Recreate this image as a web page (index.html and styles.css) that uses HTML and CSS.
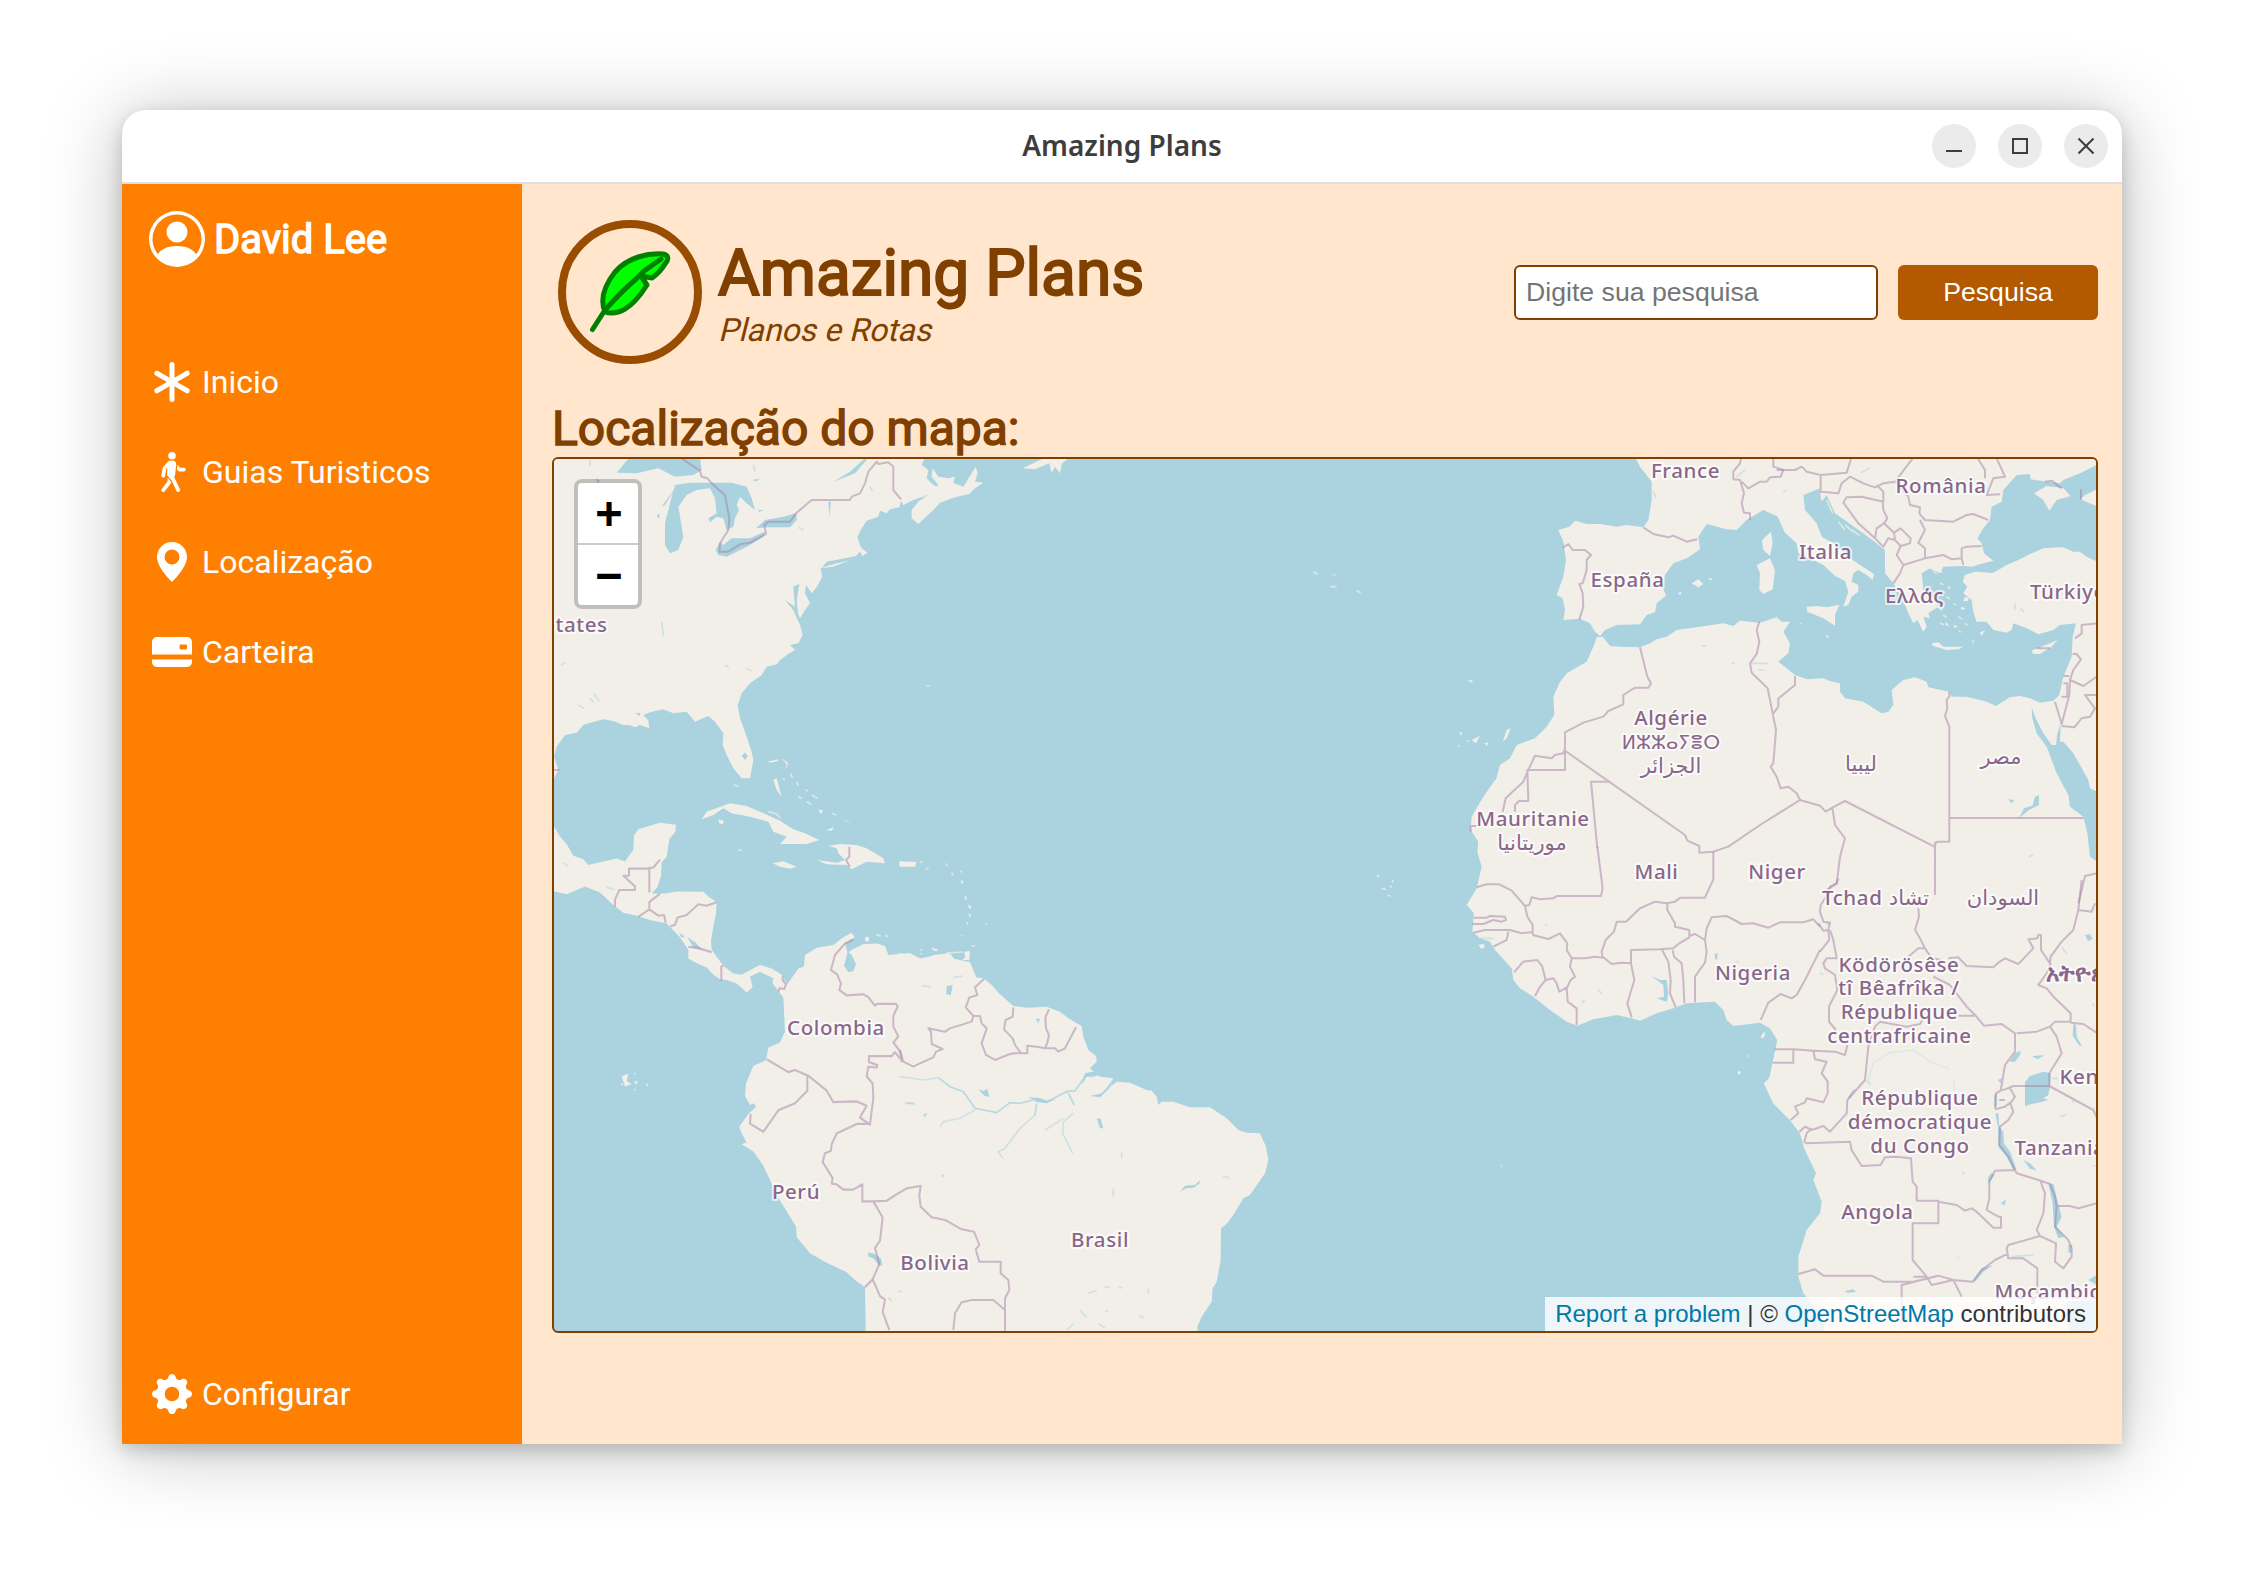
FILE: index.html
```html
<!DOCTYPE html>
<html lang="pt-BR">
<head>
<meta charset="utf-8">
<title>Amazing Plans</title>
<link rel="stylesheet" href="styles.css">
</head>
<body>
<div class="window">
  <header class="titlebar">
    <span class="titlebar-text">Amazing Plans</span>
    <div class="window-buttons">
      <span class="window-button"><svg viewBox="0 0 44 44"><path d="M14 27h16"/></svg></span>
      <span class="window-button"><svg viewBox="0 0 44 44"><path d="M15 15h14v14H15z"/></svg></span>
      <span class="window-button"><svg viewBox="0 0 44 44"><path d="M14.500 14.500l15 15m0-15l-15 15"/></svg></span>
    </div>
  </header>
  <div class="app">
    <nav class="sidebar">
      <div class="profile">
        <svg class="avatar" viewBox="0 0 16 16"><path d="M11 6a3 3 0 1 1-6 0 3 3 0 0 1 6 0"/><path fill-rule="evenodd" d="M0 8a8 8 0 1 1 16 0A8 8 0 0 1 0 8m8-7a7 7 0 0 0-5.468 11.37C3.242 11.226 4.805 10 8 10s4.757 1.225 5.468 2.37A7 7 0 0 0 8 1"/></svg>
        <span class="profile-name">David Lee</span>
      </div>
      <ul class="menu">
        <li class="menu-item"><svg class="icon" viewBox="0 0 16 16"><path d="M8 0a1 1 0 0 1 1 1v5.268l4.562-2.634a1 1 0 1 1 1 1.732L10 8l4.562 2.634a1 1 0 1 1-1 1.732L9 9.732V15a1 1 0 1 1-2 0V9.732l-4.562 2.634a1 1 0 1 1-1-1.732L6 8 1.438 5.366a1 1 0 0 1 1-1.732L7 6.268V1a1 1 0 0 1 1-1"/></svg>Inicio</li>
        <li class="menu-item"><svg class="icon" viewBox="0 0 16 16"><path d="M9.5 1.5a1.5 1.5 0 1 1-3 0 1.500 1.500 0 0 1 3 0M6.440 3.752A.75.75 0 0 1 7 3.500h1.445c.742 0 1.320.643 1.243 1.380l-.43 4.083a1.800 1.800 0 0 1-.088.395l-.318.906.213.242a.8.8 0 0 1 .114.175l2 4.250a.75.75 0 1 1-1.357.638l-1.956-4.154-1.680-1.921A.75.75 0 0 1 6 8.960l.138-2.613-.435.489-.464 2.786a.75.75 0 1 1-1.480-.246l.5-3a.75.75 0 0 1 .18-.375l2-2.250Z"/><path d="M6.250 11.745v-1.418l1.204 1.375.261.524a.8.8 0 0 1-.12.231l-2.500 3.250a.75.75 0 1 1-1.190-.914zm4.220-4.215-.494-.494.205-1.843.006-.067 1.124 1.124h1.440a.75.75 0 0 1 0 1.500H11a.75.75 0 0 1-.531-.22Z"/></svg>Guias Turisticos</li>
        <li class="menu-item"><svg class="icon" viewBox="0 0 16 16"><path d="M8 16s6-5.686 6-10A6 6 0 0 0 2 6c0 4.314 6 10 6 10m0-7a3 3 0 1 1 0-6 3 3 0 0 1 0 6"/></svg>Localização</li>
        <li class="menu-item"><svg class="icon" viewBox="0 0 16 16"><path d="M0 4a2 2 0 0 1 2-2h12a2 2 0 0 1 2 2v5H0zm11.500 1a.5.5 0 0 0-.5.5v1a.5.5 0 0 0 .5.5h2a.5.5 0 0 0 .5-.5v-1a.5.5 0 0 0-.5-.5zM0 11v1a2 2 0 0 0 2 2h12a2 2 0 0 0 2-2v-1z"/></svg>Carteira</li>
        <li class="menu-item menu-item-last"><svg class="icon" viewBox="0 0 16 16"><path d="M9.405 1.050c-.413-1.400-2.397-1.400-2.810 0l-.1.34a1.464 1.464 0 0 1-2.105.872l-.31-.17c-1.283-.698-2.686.705-1.987 1.987l.169.311c.446.82.023 1.841-.872 2.105l-.34.1c-1.400.413-1.400 2.397 0 2.810l.34.1a1.464 1.464 0 0 1 .872 2.105l-.17.31c-.698 1.283.705 2.686 1.987 1.987l.311-.169a1.464 1.464 0 0 1 2.105.872l.1.34c.413 1.400 2.397 1.400 2.810 0l.1-.34a1.464 1.464 0 0 1 2.105-.872l.31.17c1.283.698 2.686-.705 1.987-1.987l-.169-.311a1.464 1.464 0 0 1 .872-2.105l.34-.1c1.400-.413 1.400-2.397 0-2.810l-.34-.1a1.464 1.464 0 0 1-.872-2.105l.17-.31c.698-1.283-.705-2.686-1.987-1.987l-.311.169a1.464 1.464 0 0 1-2.105-.872zM8 10.930a2.929 2.929 0 1 1 0-5.860 2.929 2.929 0 0 1 0 5.858z"/></svg>Configurar</li>
      </ul>
    </nav>
    <main class="content">
      <div class="page-head">
        <svg class="logo" viewBox="558 220 144 144">
          <circle cx="630" cy="292" r="68" fill="none" stroke="#994d00" stroke-width="8"/>
          <g stroke="#008000" stroke-width="5" stroke-linejoin="round" stroke-linecap="round">
            <path fill="#00ff00" d="M605 312C600 300 604 286 615 272C628 257 648 253 663 254C669 255 669 260 665 264C661 271 656 275 652 278L641 276L647 285C640 296 634 304 625 309C618 313 611 314 605 312Z"/>
            <path fill="none" d="M592.500 329.500L605 310Q622 291 636 279L644 271L661 259"/>
          </g>
        </svg>
        <div class="brand">
          <h1 class="brand-name">Amazing Plans</h1>
          <p class="brand-tag">Planos e Rotas</p>
        </div>
        <form class="search">
          <input class="search-input" type="text" placeholder="Digite sua pesquisa">
          <button class="search-button" type="button">Pesquisa</button>
        </form>
      </div>
      <h2 class="map-title">Localização do mapa:</h2>
      <div class="map">
        <svg class="map-canvas" viewBox="554 459 1542 872">
          <!-- Land masses -->
          <g transform="translate(550 450) scale(.33333)">
            <path class="land" d="M0 20L1125 20 1115 45 1135 60 1130 85 1150 105 1180 118 1150 125 1120 140 1085 150 1053 152 1048 172 1020 178 1010 190 990 182 985 200 950 212 932 240 922 262 930 285 935 295 952 308 938 318 930 305 918 318 870 328 830 335 812 358 817 380 800 412 785 430 768 405 765 430 780 460 765 480 750 505 735 470 705 450 730 480 750 525 758 555 745 580 720 585 735 600 715 612 690 630 680 643 650 650 635 675 600 700 575 730 563 765 570 805 590 860 605 905 610 930 600 985 575 985 550 955 530 915 518 885 520 850 495 815 475 798 435 815 410 785 370 790 340 778 300 787 280 795 295 812 298 835 270 825 255 832 240 825 220 825 190 813 160 808 115 820 100 825 80 848 45 855 20 890 12 920 25 960 12 985 0 985Z"/>
            <path class="land" d="M1053 152L1100 130 1150 118 1165 105 1145 80 1148 55 1165 80 1195 85 1215 80 1210 98 1240 110 1262 75 1277 50 1283 70 1275 95 1300 98 1275 115 1258 132 1215 142 1170 158 1150 180 1105 222 1085 205 1085 180 1105 155 1140 130 1110 140 1060 165ZM1418 55L1450 40 1490 20 1560 20 1535 42 1530 70 1515 50 1505 68 1498 40 1455 58ZM810 355L850 343 900 330 850 350ZM455 1108L470 1085 540 1060 590 1068 640 1090 690 1112 730 1138 765 1150 808 1170 770 1182 690 1182 710 1160 670 1145 655 1115 600 1100 545 1090 520 1075 490 1095ZM505 1108L522 1112 518 1123 508 1120ZM668 1240L700 1234 740 1250 720 1256 690 1250ZM800 1230L860 1238 885 1230 865 1210 860 1195 835 1187 870 1182 920 1185 950 1195 975 1210 1000 1225 1005 1240 950 1235 905 1258 890 1245 830 1243ZM1048 1234L1100 1236 1095 1250 1048 1250ZM670 990L680 985 688 1015 695 1040 680 1020ZM653 935L685 928 684 933 660 938ZM695 925L715 940 706 960 710 942ZM828 1140L852 1132 845 1142ZM880 1107L905 1118 888 1113ZM805 1077L820 1082 812 1092ZM1232 1290l8 4-4 10zM1243 1335l8 8-4 10z"/>
            <path class="shoal" d="M722 970l6 14M740 995l4 12M765 1018l8 6M785 1035l18 10M770 1055l14 8M745 1040l10 6M845 1090l14 5M655 1085l24 6 12 14M700 985l4 6M1130 708h8M1110 1236h8M1128 1256h8M1188 1240l4 10M1232 1262l4 6M1205 1268l4 8M552 1005l14 4M565 1200l10 2"/>
          </g>
          <g transform="translate(550 780) scale(.33333 .35714)">
            <path class="land" d="M-5 125L12 130 30 158 50 180 70 212 100 222 115 238 150 230 200 220 225 228 250 195 252 155 265 138 330 120 378 125 376 145 358 165 350 215 335 230 333 270 322 300 305 318 345 318 380 312 460 313 478 328 500 342 498 375 490 410 483 450 485 475 520 520 550 542 575 545 605 530 630 518 665 528 695 545 712 572 745 528 762 522 765 490 800 470 850 462 880 440 905 428 914 440 885 457 893 485 905 475 940 460 980 458 1005 465 1015 490 1080 485 1110 500 1150 492 1190 488 1210 500 1260 510 1300 600 1300 1600 948 1600 945 1420 915 1400 890 1378 830 1352 780 1325 740 1280 738 1250 705 1200 685 1170 665 1130 640 1080 610 1040 575 1020 590 1015 575 990 568 970 595 935 618 915 612 905 600 910 585 885 588 850 610 800 648 785 655 750 690 735 705 705 700 610 685 590 668 570 670 555 630 537 600 550 608 580 590 595 560 570 530 560 510 558 490 545 470 525 445 515 415 500 415 475 390 440 350 402 300 392 260 380 220 372 190 350 150 315 105 298 50 320 -5 308ZM215 830l20-8-5 20 15 10-20 6zM252 845l12-2-6 10zM288 850l8 2-6 6zM948 438l10 4-4 12-10-6z"/>
            <path class="shoal" d="M980 433l12 4M1005 436l8 2M1150 472l12 6M212 850l8 4M252 820l4 4M252 866l4 2M1115 485l-4 3"/>
          </g>
          <g transform="translate(900 900) scale(.33333)">
            <path class="land" d="M-5 160L35 162 60 178 80 178 100 165 150 160 165 180 200 188 215 200 222 232 250 235 275 255 297 280 310 292 340 318 380 323 440 320 480 335 510 358 545 378 550 410 565 450 588 468 590 485 570 505 600 530 640 535 630 560 650 545 690 548 740 570 755 572 770 590 775 615 785 605 820 605 870 622 930 622 980 655 1015 690 1040 698 1080 700 1098 740 1105 780 1095 820 1050 885 1030 895 1000 945 980 972 963 985 962 1080 950 1145 938 1165 935 1205 905 1250 892 1280 895 1310 -5 1310ZM192 155l18-2-2 28-20-2 8-8zM202 12l12 8-4 8zM205 40l8 4-4 8zM200 65l6 4-4 6zM255 68l8 4-4 3zM183 105l8 2-4 3z"/>
            <path class="shoal" d="M95 145l10 6 8-4M60 150h6M138 159l50-3M215 138h10"/>
          </g>
          <g transform="translate(1440 450) scale(.33333)">
            <path class="land" d="M585 20L600 50 635 95 635 150 625 210 610 232 560 225 530 230 480 222 440 222 405 212 388 230 355 240 370 275 378 330 370 380 350 435 368 445 375 480 370 510 420 506 450 520 465 545 480 558 495 540 530 525 600 523 620 495 645 487 650 460 678 437 668 410 675 375 700 340 740 325 780 298 775 260 800 222 860 238 890 240 920 210 970 180 1015 200 1035 248 1045 248 1045 20Z"/>
            <path class="land" d="M470 562L460 590 440 635 380 670 358 700 340 740 343 795 320 830 285 865 230 885 210 925 180 945 165 1000 130 1050 115 1085 90 1130 115 1170 115 1210 1200 1210 1200 700 1140 687 1105 690 1065 675 1040 655 1015 635 1045 610 1050 580 1030 545 1050 515 1025 515 1010 502 960 518 900 512 880 528 850 520 780 530 710 540 680 560 650 568 630 580 600 592 540 590 510 588 488 560ZM993 245L998 280 990 318 970 300 966 270ZM990 325L1005 360 998 418 970 432 958 420 960 370 950 345ZM755 400L775 388 790 402 775 412ZM805 383l15 4-10 4zM714 430l12-6-6 12zM84 690l16 2-8 6zM58 848l8-2-2 12zM95 870l25-12-12 22zM132 878l14 0-6 10zM188 875L200 840 212 835 200 865Z"/>
            <path class="shoal" d="M80 873h8M54 888h6M-250 422l12 6M-380 365l14 8M-330 410h20M-320 375h6"/>
          </g>
          <g transform="translate(1780 450) scale(.33333)">
            <path class="land" d="M-10 20L-10 195 0 215 15 248 50 280 55 310 100 330 130 345 165 378 195 393 205 425 190 470 205 465 215 440 235 425 235 405 215 395 220 370 235 360 260 375 278 390 282 372 240 345 205 320 160 280 125 260 110 220 75 180 70 135 95 125 118 115 125 155 140 135 165 190 215 225 270 265 315 300 315 370 340 400 365 440 385 490 400 520 412 510 430 545 440 530 430 500 450 505 445 490 475 470 455 440 430 420 425 370 450 355 480 370 490 350 545 348 575 350 640 332 612 310 605 280 592 265 610 235 630 210 635 170 665 155 670 120 710 75 750 72 752 88 800 95 840 100 850 90 900 70 950 45 950 20Z"/>
            <path class="land" d="M960 338L940 330 920 320 900 305 880 305 850 292 790 295 750 312 715 330 680 345 640 368 585 365 555 375 548 395 562 410 550 430 575 450 580 485 590 515 620 515 640 540 680 548 695 540 700 520 740 535 775 553 820 540 840 525 888 520 878 560 875 620 850 680 838 735 820 752 780 758 750 745 720 738 690 742 648 768 620 755 560 740 515 740 508 725 445 712 440 695 405 682 370 690 335 720 340 765 325 785 305 790 250 755 195 745 180 725 175 705 130 685 80 688 40 675 0 650 -20 620 -20 1360 960 1360ZM80 470L110 468 140 472 178 464 165 495 165 527 130 505 82 485ZM455 580L475 577 490 590 550 590 535 598 500 600 460 588ZM755 602L790 588 832 570 815 590 780 612 760 612ZM762 130L800 108 850 115 872 138 830 150 808 182 790 150ZM900 148L915 135 950 118 950 168ZM600 548l15-8-10 18zM555 440l12 4-4 10-14-2zM498 515l10 14-12-4zM520 525l14 4-10 6zM500 410l12 0-2 8zM535 540l10 6-6 2zM545 470l12 6-14 4z"/>
            <path class="shoal" d="M450 350l20 22M465 350l22 18M480 400l10 4M498 440l12 6M475 470l12 12M520 460l8 6M535 500l12 8M490 495l10 8M480 520l12 4M555 520l8 6M580 570v10M175 215l20 24M195 225l24 20M215 240l24 16M140 150l18 40M138 555l8 8M62 518v5"/>
          </g>
          <g transform="translate(1440 780) scale(.33333)">
            <path class="land" d="M165 0L130 50 95 110 92 150 115 185 112 215 125 260 110 325 80 375 102 400 97 455 120 475 150 485 165 510 215 565 220 600 240 625 280 650 330 690 380 725 412 737 460 718 530 705 575 715 600 722 650 700 700 685 740 670 825 665 850 690 860 720 880 738 960 728 990 745 1012 780 1000 840 988 895 972 910 1000 970 1050 1020 1080 1060 1095 1110 1128 1175 1130 1210 1200 1210 1200 0ZM962 770l10-14 4 6-8 14zM892 876l8-4 2 8-6 4zM115 495l15-4 5 10-10 6z"/>
            <path class="shoal" d="M922 828h5M182 1157h4M-175 325l14 4M-190 285l8 6M-142 300v8M-150 315l4 8M-158 345l10 4"/>
          </g>
          <g transform="translate(1760 880) scale(.33333)">
            <path class="land" d="M0 -50L0 425 30 445 52 480 40 540 28 595 12 610 40 670 90 720 120 760 135 810 168 880 160 900 185 965 180 1000 140 1050 115 1130 115 1190 130 1240 180 1300 200 1370 1020 1370 1020 -50Z"/>
          </g>
          <!-- Lakes, rivers and national borders -->
          <g transform="translate(550 450) scale(.33333)">
            <path class="water" d="M200 68L240 20 450 20 455 60 430 75 375 80 325 55 260 70ZM375 105L420 98 470 98 545 98 590 110 605 145 615 180 590 160 570 140 560 165 567 180 555 205 550 230 530 240 520 205 500 200 480 217 475 205 500 190 495 145 480 115 440 120 410 135 385 170 400 260 385 300 360 310 345 285 345 220 360 160ZM497 300L510 275 520 285 545 265 600 265 645 245 640 260 600 285 560 305 530 320 505 315ZM618 235L645 210 700 200 738 190 740 210 720 232 650 232ZM850 95L900 65 945 25 950 30 915 70ZM335 170L375 115 370 125 345 165ZM835 155L843 155 838 200ZM575 918l10-10 8 10-8 12zM138 85l12 8-8 8zM730 410L748 402 740 450 745 500 735 470ZM320 198l8-8v16zM605 90l25-4-10 8zM625 180l15 0-12 6zM255 790l16-2-2 10z"/>
            <path class="stream" d="M335 515l6 45M130 730l18 24M35 645l10-8M85 765l16 10M120 745l12 12M525 645l12 8M590 655l14 8M960 110l8 14M745 232l16 8M610 45l6 20M120 30v18"/>
            <path class="border" d="M390 22L450 62 455 80 472 85 490 105 525 135 538 205 535 240 510 280 508 305 535 305 570 283 600 278 648 252 643 225 655 215 720 215 740 188 785 150 900 150 905 140 930 130 945 100 955 65 980 35 985 42 1015 37 1030 50 1030 120 1053 148M8 960H28M898 1190V1220L888 1230 900 1250"/>
          </g>
          <g transform="translate(550 780) scale(.33333 .35714)">
            <path class="water" d="M893 480L905 490 918 515 910 535 895 538 882 520 888 500ZM388 430l12 4 4 8-10-2zM412 440l25 15 18 18-25-4zM955 1322l20 6 18 12 4 20-12-2-14-18-16-6z"/>
            <path class="stream" d="M1120 940l12-6M1065 905l30 2M1045 1430l10 4M1015 1450l10 8M40 232l15 10M170 300l25 8M1175 1110l8-4"/>
            <path class="border" d="M330 223L310 245 298 246V315M298 248H237V268H220L255 298V308H208L195 335V355M330 318L298 342V362L325 380 342 378 347 400M298 362L265 383M360 410L375 405 383 385 410 378 445 348 470 352 500 342M415 467L440 470 460 475 485 482M520 520L514 522V562M698 550V560L708 572 703 585 688 583 686 592M910 447L885 458 855 490 843 532 862 545 873 570 868 588 890 603 940 600 955 608 975 632 980 627H1038L1043 635 1030 660V690L1045 718 1030 735 1050 760 1055 790M1050 780L1035 762 1025 773H957V790L982 798 980 805 955 803 950 830 968 850 970 890 960 965 930 945 950 912 920 900 850 902 830 870 775 828 735 812 715 818 650 782M772 828V870L735 905 685 925 640 985 600 962 602 935M958 963H920L860 990 845 1020 843 1038 825 1045 818 1070 848 1115 845 1130 860 1132 880 1147H910L937 1132V1180H970L1010 1178 1050 1154M970 1180L998 1225 990 1290 975 1310 988 1355 968 1398 945 1420M968 1398L990 1445 1005 1455 998 1490 1018 1540"/>
          </g>
          <g transform="translate(900 900) scale(.33333)">
            <path class="water" d="M555 520L590 512 605 522 580 530 560 530 545 555ZM640 535L628 565 600 592 570 588 605 580 622 562ZM235 568l15 5 12-6 6 24-15-4zM385 592l35 2 20 8 30-6-30 14-30-4zM590 655l12 2 8 28-10 0zM408 355l12 2-6 14zM140 258l18-2-6 30-14-4 2-14zM840 875l15-18 30-2 15-14-2 10-18 12-22 2z"/>
            <path class="river" d="M115 533L150 560 190 575 225 625 290 638 330 608 360 610 400 600M440 605L500 575 525 572 555 530M410 610L405 645M505 580l18 35"/>
            <path class="stream" d="M0 530L70 540 115 533M225 630L180 655 130 665 120 680M405 645L360 685 315 745 295 755 308 775M520 640L490 665 488 700 518 760M490 655L435 690M968 828l20 6M665 755v20M640 865v25M75 640v12M20 608l20 2M65 258l28 2M160 232l28-4M540 1230l20 22M565 1180l25-8M615 1160l15 4M745 1165v15M718 1248l16 6M500 1290l20-18M595 1270l20 14M655 1163h12M615 1232l10 4M128 824v8"/>
            <path class="border" d="M252 237L225 262 232 285 208 293 197 322 220 348H240L245 370 260 385 245 430 258 465 285 480 330 462 345 460H382V437L410 440 435 445 465 445 475 455 495 445 528 382M340 322L338 350 317 360 312 388 338 415 345 435 362 458M447 328L436 352 438 385 447 405 442 428 435 445M220 348L215 365 150 385 135 395 85 385 93 395 95 432 128 447 108 455 100 472 60 490 40 500 10 485 0 450M0 877L20 865 62 858 58 885 62 920 95 952 135 960 185 988 222 995 238 1035 227 1048 238 1085H302V1120L325 1140 328 1170 315 1195V1230L280 1200H215L185 1207 165 1240 160 1290M315 1225V1300"/>
          </g>
          <g transform="translate(1440 450) scale(.33333)">
            <path class="stream" d="M890 80l25-20M1030 125l8-4M785 588h14M875 638l10 2M935 640h50M955 660h16M640 125l8 20"/>
            <path class="border" d="M610 232L640 252 685 262 700 257 740 275 772 268M368 293L385 282 398 300H435L453 315 440 330V360L428 400 418 402 428 430 430 470 418 508M905 20L900 40 880 65V88L900 90 912 130 905 160 912 188 930 190V210M905 95L925 115 960 95 980 95 990 82 1022 80 1030 60 1000 50V20M600 592L622 680 633 700 625 713H585L550 735V763L505 783 490 800 430 818 375 847V895L370 910 345 915 335 925 285 917 265 960 250 995 197 1045 188 1085M375 895V960H262L265 1053H237L225 1065V1085M372 900L735 1155 742 1172 778 1188V1208L820 1205 865 1190 960 1125 1080 1050M508 995H453L472 1195M958 515L950 540 958 575 950 612 930 640 935 668 983 715 998 790 1008 840 1000 940 992 950 1010 980 1022 1015 1045 1010 1070 1030 1080 1050M1015 770L1000 790M1015 770V745L1020 742M92 1145V1128H110"/>
          </g>
          <g transform="translate(1780 450) scale(.33333)">
            <path class="water" d="M590 345L630 336 670 345 650 352 635 368 600 362ZM755 770L765 800 790 850 815 885 828 885 832 850 842 822 840 875 850 875 880 910 925 990 930 1015 960 1030 960 1240 930 1220 922 1150 910 1100 870 1070 865 1035 830 970 800 890 770 850 757 805ZM685 1048l18 2-8 10zM765 1040l12-5 0 30-30 15-30 25 15-30 25-8z"/>
            <path class="stream" d="M243 68L270 54M705 460v18M722 475l10 12M745 1220l14-6"/>
            <path class="border" d="M-10 60L45 60 65 50 80 65 122 75 200 68 215 20M122 75V125L175 130 185 100 210 80 250 100 285 112 310 100 345 95 402 20M290 105L310 125V155L245 140 200 142 190 158 235 220 285 265 290 235 312 220 322 205 310 180 308 155M345 95L385 140 390 165 420 172 418 190 435 210 520 215 560 195 580 192 625 210M312 220L342 248 362 235 392 265 390 280 362 288 350 315 370 345 435 325V295L415 278 435 240 420 210M342 248L345 270 362 288M285 265L310 290 325 265 345 270M370 345L360 370 340 400M435 325L490 315 515 328 545 325 545 295 560 290 605 288M545 325L550 345M590 20L615 60V85M650 25L675 80 640 85 620 135 660 133M795 95L815 92 845 115M903 118V150M885 565L905 550V525L950 520M878 612H890L903 628 880 660 870 690 868 735 845 822 825 755M870 690L910 708 950 680M850 678H868M850 700H862V740H845M950 735H915L945 775 930 800 905 805 883 832 845 828M45 678V705L0 742M508 725V740L500 750 502 775 495 798 508 830V1175H470L463 1190 195 1053 157 1073 137 1085 120 1067 60 1050M508 1104H910M465 1175V1335M157 1073L165 1125 195 1165 180 1220 170 1300 125 1330M950 1270L915 1278 905 1320 895 1360M770 595H810"/>
          </g>
          <g transform="translate(1440 780) scale(.33333)">
            <path class="water" d="M635 588L660 600 680 600 685 640 680 665 650 655 672 650 670 615ZM825 520l8 2-2 18-6-4z"/>
            <path class="stream" d="M475 628l10 14M425 668l10-8M315 435h8M120 475h40M886 546h10"/>
            <path class="border" d="M110 322L140 313H178L215 332 255 378 268 375 275 352 300 358 340 355 350 348H483L488 325 472 200M255 378L262 410 278 435V465M102 413H140L150 408 195 410 198 420 185 425 160 420 130 432H97M100 458L135 450H210L245 460 278 456M278 465L325 477 360 460 382 490 380 510 395 535 390 560 405 590 392 600 380 625 383 665 410 685V735M205 455L200 480 160 500M222 577L250 545 292 540 307 560 317 600 340 595 350 610 358 635 380 622M317 600L300 620 285 648M395 535H435L465 530 488 533 485 515 497 480 522 455 530 425H558L600 385 645 365 680 370 705 365 722 353H795L820 298V215M488 530L515 552 545 548 573 550V510L660 508 700 505 718 490 748 472V450L705 440V430L682 390V370M573 550L583 600 562 670 575 712M665 508L685 545 692 600 690 640 707 682M698 510L702 530 725 550 730 600 733 670M748 468L765 462 795 480 800 515 795 548 765 590V667M795 480L800 445 815 412 860 408 905 432 940 430 985 443 1020 427H1090L1120 418 1140 440M1140 510L1115 560 1095 600 1070 645 1055 655 1022 642 985 668 962 720"/>
          </g>
          <g transform="translate(1760 880) scale(.33333)">
            <path class="water" d="M795 605L810 588 850 575 872 580 870 620 865 645 850 655 865 660 835 668 815 672 795 678 795 640ZM940 432L948 435 950 470 966 498 958 496 938 468ZM748 545L765 520 782 512 780 525 765 545ZM714 600l12-6-4 16zM702 645l8-4 0 40-6-4zM706 700L715 700 718 740 730 755 732 790 750 815 770 870 760 870 740 830 715 800 714 740ZM790 840l20 10 20 22-20-6zM683 895L695 878 703 885 686 912ZM865 910L880 912 892 960 905 1010 890 1040 912 1070 895 1075 882 1040 878 970ZM925 1095l12 0-4 24-8-2zM638 1205L665 1165 700 1155 670 1175 645 1205ZM975 165l15-2 8 14-14 6zM722 970l16-12-4 18zM985 1200L1010 1185V1215ZM918 1265L1010 1255V1360H930ZM255 1233l25-5 8 8-25 2zM815 528l38-2-20 12zM265 650l15-20 8-4-20 32z"/>
            <path class="stream" d="M755 1130L820 1125M900 710l18-6M940 660v10M605 880h10M595 1130v6M905 200l15 22M200 135l10-6M180 278l10 6M1000 370v10M320 600l12 14M875 595h18M998 858h10"/>
            <path class="stream faint" d="M325 600L340 550 390 518 460 510 510 545 570 568M582 600v30"/>
            <path class="border" d="M235 -5L230 10 210 20 205 40 182 75 180 95 190 125 210 128 205 150 190 152 175 130M205 150L208 180 180 215M210 150L220 180 230 235H200L190 250 195 265 225 285 232 330 207 380V425L228 450M475 85L477 110 465 150 480 175 495 205H475L445 230M495 205L515 235 545 240M520 290L570 315 620 380 645 405 672 437 725 432 765 460V515L735 555 725 615 722 632 708 640 705 685M565 235L595 232 620 258 700 262 715 248 735 235 775 252 820 205 805 178 832 175 835 165 843 165V210L870 250 872 230 905 185 940 150 955 90 965 0M955 90L995 95 1005 70M872 250L860 280 835 315 860 325 885 355 932 400V425H885L870 440 830 455 770 460M595 407H645M932 428L970 432 1010 458M870 440L890 470 905 520 868 580V618L1000 690 1010 712M868 618H760L735 628 722 632M750 625L765 650 755 665 735 680 705 688M735 660H718M750 668L760 695 745 720 720 740 718 795 745 830 765 870 705 872 688 905V955L680 990 715 1010 723 1010V1043H700L650 995 635 985 615 992 590 975 535 965V960M765 870L770 880 835 900 870 912 885 950 890 980 885 1040 925 1080 935 1105V1130L910 1165 885 1145 888 1090 840 1068 830 1050 850 1000 855 940 840 900M895 978H930L955 985 1010 970M840 1068L745 1095 740 1105 745 1135 790 1135 832 1165V1240M745 1120L705 1140 665 1170 638 1205 580 1200 535 1187 460 1205H370L335 1187H190L165 1168 115 1182M360 425L345 440 325 500 315 600 262 660 260 700 210 755 190 738 155 750 135 740 118 755M42 508H100V548H38M100 508L160 512 225 515 255 525 262 495M160 510L165 538 200 545 185 580 203 605V640L190 667 140 655 135 667 105 680 115 700 92 720M155 745L140 760 133 785 140 790 270 785 275 810 305 858 362 855 375 832 410 830 453 835 458 905 470 920V962H535V1030H458V1140L500 1190 515 1215 580 1200 605 1250M535 1187L425 1215V1350M500 1190H460M360 425L440 440 480 432 487 420"/>
          </g>
          <!-- Country names -->
          <g class="place">
            <text x="1685.500" y="477.700">France</text>
            <text x="1941" y="492.700">România</text>
            <text x="1825.500" y="559">Italia</text>
            <text x="1627.500" y="586.700">España</text>
            <text x="1914.500" y="602.700">Ελλάς</text>
            <text class="from-left" x="2030" y="599.300">Türkiye</text>
            <text class="from-left" x="555.500" y="631.700">tates</text>
            <text x="1671" y="724.700">Algérie</text>
            <text class="tifinagh" x="1671" y="748.500">ⵍⵣⵣⴰⵢⴻⵔ</text>
            <text class="script" x="1671" y="773">الجزائر</text>
            <text x="1533" y="825.700">Mauritanie</text>
            <text class="script" x="1532" y="850">موريتانيا</text>
            <text x="1656.500" y="878.700">Mali</text>
            <text x="1777" y="878.700">Niger</text>
            <text x="1753" y="980">Nigeria</text>
            <text class="script" x="1861" y="771">ليبيا</text>
            <text class="script" x="2001" y="763.700">مصر</text>
            <text class="from-left" x="1822" y="905">Tchad</text>
            <text class="script" x="1909" y="905">تشاد</text>
            <text class="script" x="2003" y="905">السودان</text>
            <text x="1899" y="971.700">Ködörösêse</text>
            <text x="1899" y="995.300">tî Bêafrîka /</text>
            <text x="1899.500" y="1018.700">République</text>
            <text x="1899.500" y="1042.700">centrafricaine</text>
            <text class="from-left ethiopic" x="2046" y="981">አትዮጵያ</text>
            <text class="from-left" x="2059.500" y="1084">Kenya</text>
            <text x="1920" y="1105">République</text>
            <text x="1920" y="1128.700">démocratique</text>
            <text x="1920" y="1152.700">du Congo</text>
            <text class="from-left" x="2014.500" y="1155">Tanzania</text>
            <text x="1877.500" y="1219.300">Angola</text>
            <text class="from-left" x="1994.500" y="1298.500">Moçambique</text>
            <text x="836" y="1034.600">Colombia</text>
            <text x="796" y="1198.600">Perú</text>
            <text x="935" y="1270">Bolivia</text>
            <text x="1100" y="1246.700">Brasil</text>
          </g>
        </svg>
        <div class="zoom-control">
          <span class="zoom-button">+</span>
          <span class="zoom-button">−</span>
        </div>
        <div class="attribution"><a class="link">Report a problem</a> | © <a class="link">OpenStreetMap</a> contributors</div>
      </div>
    </main>
  </div>
</div>
</body>
</html>
```
FILE: styles.css
```css
* { box-sizing: border-box; }

body {
  margin: 0;
  padding: 110px 122px 0;
  height: 1578px;
  overflow: hidden;
  background: #fff;
  font-family: Roboto, sans-serif;
}

.window {
  width: 2000px;
  height: 1334px;
  display: flex;
  flex-direction: column;
  border-radius: 24px 24px 0 0;
  background: #fff;
  box-shadow: 0 6px 18px rgba(0, 0, 0, .18), 0 6px 76px rgba(0, 0, 0, .25);
}

.titlebar {
  height: 74px;
  display: grid;
  grid-template-columns: 1fr auto 1fr;
  align-items: center;
  padding: 0 14px;
  border-bottom: 2px solid #dfdfdf;
}

.titlebar-text {
  grid-column: 2;
  padding-bottom: 2px;
  font: 600 28px "Noto Sans", sans-serif;
  color: #3d3d3d;
}

.window-buttons {
  display: flex;
  justify-content: flex-end;
  gap: 22px;
}

.window-button {
  width: 44px;
  height: 44px;
  border-radius: 50%;
  background: #ebebeb;
}

.window-button svg {
  display: block;
  fill: none;
  stroke: #3d3d3d;
  stroke-width: 2;
}

.app {
  flex: 1;
  display: flex;
}

.sidebar {
  width: 400px;
  display: flex;
  flex-direction: column;
  padding: 27px 30px 30px;
  background: #ff8000;
  color: #fff;
  fill: #fff;
}

.profile {
  display: flex;
  align-items: center;
  gap: 9px;
  margin-left: -3px;
}

.avatar {
  width: 56px;
  height: 56px;
}

.profile-name {
  font-size: 40px;
  -webkit-text-stroke: 1.3px #fff;
}

.menu {
  flex: 1;
  display: flex;
  flex-direction: column;
  gap: 50px;
  margin: 95px 0 0;
  padding: 0;
  list-style: none;
}

.menu-item {
  height: 40px;
  display: flex;
  align-items: center;
  gap: 10px;
  font-size: 32px;
}

.menu-item-last { margin-top: auto; }

.icon {
  width: 40px;
  height: 40px;
}

.content {
  flex: 1;
  padding: 36px 24px 0 30px;
  background: #ffe6cc;
  color: #804000;
}

.page-head {
  display: flex;
  align-items: center;
  height: 144px;
  padding-left: 6px;
}

.logo {
  width: 144px;
  height: 144px;
}

.brand {
  margin: 0 auto 0 16px;
}

.brand-name {
  margin: 0;
  font-size: 64px;
  font-weight: 400;
  line-height: 75px;
  -webkit-text-stroke: 2px #804000;
}

.brand-tag {
  margin: 0;
  font-size: 32px;
  line-height: 38px;
  transform: skewX(-14deg);
  transform-origin: 0 30px;
}

.search {
  display: flex;
  gap: 20px;
}

.search-input,
.search-button {
  height: 55px;
  border-radius: 6px;
  font: 26.67px "Liberation Sans", sans-serif;
}

.search-input {
  width: 364px;
  padding: 0 10px;
  border: 2px solid #804000;
  background: #fff;
}

.search-input::placeholder { color: #757575; }

.search-button {
  width: 200px;
  padding: 0;
  border: 0;
  background: #b35900;
  color: #fff;
}

.map-title {
  margin: 37px 0 0;
  font-size: 48px;
  font-weight: 400;
  line-height: 56px;
  -webkit-text-stroke: 1.5px #804000;
}

.map {
  position: relative;
  width: 1546px;
  height: 876px;
  overflow: hidden;
  border: 2px solid #804000;
  border-radius: 6px;
  background: #aad3df;
}

.map-canvas { display: block; }

.land { fill: #f2efe9; }
.water { fill: #aad3df; }

.shoal {
  fill: none;
  stroke: #f2efe9;
  stroke-width: 5;
  opacity: .7;
}

.river,
.stream {
  fill: none;
  stroke: #aad3df;
  stroke-width: 5;
  opacity: .8;
}

.stream { opacity: .5; }
.faint { opacity: .25; }

.border {
  fill: none;
  stroke: #a57fa3;
  stroke-width: 6;
  stroke-linejoin: round;
  opacity: .5;
}

.place {
  fill: #8a668a;
  stroke: rgba(255, 255, 255, .7);
  stroke-width: 4px;
  stroke-linejoin: round;
  paint-order: stroke;
  font: 500 20.5px "Noto Sans", "DejaVu Sans", sans-serif;
  letter-spacing: .6px;
  text-anchor: middle;
}

.from-left { text-anchor: start; }

.script {
  font-size: 21px;
  letter-spacing: 0;
}

.tifinagh {
  font-size: 19px;
  letter-spacing: 0;
}

.ethiopic {
  font-size: 23px;
  font-weight: 700;
  letter-spacing: 0;
}

.zoom-control {
  position: absolute;
  top: 20px;
  left: 20px;
  border: 4px solid rgba(0, 0, 0, .2);
  border-radius: 8px;
  background: #fff;
  background-clip: padding-box;
}

.zoom-button {
  display: block;
  width: 60px;
  height: 60px;
  color: #000;
  font: bold 44px/60px "DejaVu Sans Mono", monospace;
  text-align: center;
  text-indent: 2px;
}

.zoom-button:first-child {
  height: 62px;
  border-bottom: 2px solid #ccc;
}

.attribution {
  position: absolute;
  right: 0;
  bottom: 0;
  padding: 0 10px 1px;
  background: rgba(255, 255, 255, .8);
  color: #333;
  font: 24px/33px "Liberation Sans", sans-serif;
}

.link { color: #0078a8; }
```
